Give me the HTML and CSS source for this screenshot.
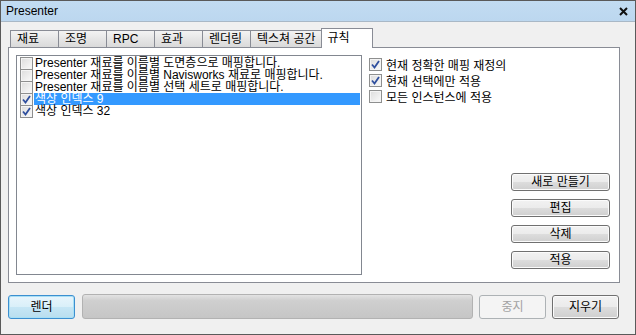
FILE: index.html
```html
<!DOCTYPE html>
<html lang="ko">

<head>
    <meta charset="UTF-8">
    <title>Presenter</title>
    <link rel="stylesheet" href="styles.css">
</head>

<body>
    <div class="window">
        <div class="titlebar">
            <span class="title">Presenter</span>
            <svg class="close" width="9" height="9" viewBox="0 0 9 9">
                <path d="M1 1 L8 8 M8 1 L1 8" stroke="#111" stroke-width="2" />
            </svg>
        </div>

        <div class="content">
            <div class="tabs">
                <div class="tab">재료</div>
                <div class="tab">조명</div>
                <div class="tab">RPC</div>
                <div class="tab">효과</div>
                <div class="tab">렌더링</div>
                <div class="tab">텍스쳐 공간</div>
                <div class="tab active">규칙</div>
            </div>

            <div class="panel">
                <div class="list">
                    <div class="row">
                        <span class="cb"></span>
                        <span class="label">Presenter 재료를 이름별 도면층으로 매핑합니다.</span>
                    </div>
                    <div class="row">
                        <span class="cb"></span>
                        <span class="label">Presenter 재료를 이름별 Navisworks 재료로 매핑합니다.</span>
                    </div>
                    <div class="row">
                        <span class="cb"></span>
                        <span class="label">Presenter 재료를 이름별 선택 세트로 매핑합니다.</span>
                    </div>
                    <div class="row selected">
                        <span class="cb checked">
                            <svg width="11" height="11" viewBox="0 0 11 11"><path d="M2 5.5 L4.5 8.5 L9 2" fill="none" stroke="#2f4f9e" stroke-width="1.8" /></svg>
                        </span>
                        <span class="label">색상 인덱스 9</span>
                    </div>
                    <div class="row">
                        <span class="cb checked">
                            <svg width="11" height="11" viewBox="0 0 11 11"><path d="M2 5.5 L4.5 8.5 L9 2" fill="none" stroke="#2f4f9e" stroke-width="1.8" /></svg>
                        </span>
                        <span class="label">색상 인덱스 32</span>
                    </div>
                </div>

                <div class="side">
                    <div class="options">
                        <div class="option">
                            <span class="cb checked">
                                <svg width="11" height="11" viewBox="0 0 11 11"><path d="M2 5.5 L4.5 8.5 L9 2" fill="none" stroke="#2f4f9e" stroke-width="1.8" /></svg>
                            </span>
                            <span>현재 정확한 매핑 재정의</span>
                        </div>
                        <div class="option">
                            <span class="cb checked">
                                <svg width="11" height="11" viewBox="0 0 11 11"><path d="M2 5.5 L4.5 8.5 L9 2" fill="none" stroke="#2f4f9e" stroke-width="1.8" /></svg>
                            </span>
                            <span>현재 선택에만 적용</span>
                        </div>
                        <div class="option">
                            <span class="cb"></span>
                            <span>모든 인스턴스에 적용</span>
                        </div>
                    </div>

                    <div class="actions">
                        <button class="btn">새로 만들기</button>
                        <button class="btn">편집</button>
                        <button class="btn">삭제</button>
                        <button class="btn">적용</button>
                    </div>
                </div>
            </div>

            <div class="bottom">
                <button class="btn big render">렌더</button>
                <div class="progress"></div>
                <button class="btn big" disabled>중지</button>
                <button class="btn big">지우기</button>
            </div>
        </div>
    </div>
</body>

</html>
```

FILE: styles.css
```css
* {
    margin: 0;
    padding: 0;
    box-sizing: border-box;
}

:root {
    --face: #f0f0f0;
    --tab-border: #898c95;
    --text: #000000;
    --ui-font: "Liberation Sans", "Noto Sans CJK KR", sans-serif;
}

body {
    background-color: var(--face);
    font-family: var(--ui-font);
    font-size: 12px;
    color: var(--text);
}

.window {
    width: 636px;
    height: 335px;
    border: 1px solid #5a5a5a;
    background-color: var(--face);
    display: flex;
    flex-direction: column;
}

.titlebar {
    height: 21px;
    background: linear-gradient(#c2dcf2, #bcd7ef);
    border-bottom: 1px solid #a9b8c6;
    display: flex;
    align-items: center;
    justify-content: space-between;
    padding: 0 7px 0 5px;
}

.title {
    font-size: 12px;
}

.content {
    padding: 6px 15px 0 7px;
    display: flex;
    flex-direction: column;
}

/* tab strip */
.tabs {
    display: flex;
    align-items: flex-end;
    height: 19px;
    padding-left: 2px;
}

.tab {
    height: 17px;
    min-width: 49px;
    padding: 0 6px;
    margin-right: -1px;
    border: 1px solid var(--tab-border);
    border-bottom: none;
    background: linear-gradient(#f3f3f3, #e6e6e6 50%, #dadada);
    line-height: 16px;
    white-space: nowrap;
}

.tab.active {
    height: 20px;
    min-width: 52px;
    margin-left: -1px;
    margin-bottom: -1px;
    background: #ffffff;
    position: relative;
    z-index: 1;
    padding-top: 1px;
}

/* panel */
.panel {
    width: 612px;
    height: 236px;
    border: 1px solid var(--tab-border);
    background: #ffffff;
    display: flex;
    padding: 7px 0 7px 7px;
}

.list {
    width: 346px;
    border: 1px solid #828790;
    padding: 0 1px 0 3px;
}

.row {
    display: flex;
    align-items: center;
    height: 12px;
    white-space: nowrap;
}

.row:first-child {
    margin-top: 1px;
}

.label {
    padding: 0 1px;
    line-height: 12px;
    flex: 1;
}

.row.selected .label {
    background: #3399ff;
    color: #ffffff;
}

.cb {
    width: 13px;
    height: 13px;
    flex: none;
    border: 1px solid #8e8f8f;
    background: linear-gradient(135deg, #dcdcdc, #fafafa);
    box-shadow: inset 0 0 0 1px #f4f4f4;
    display: flex;
    align-items: center;
    justify-content: center;
    margin-right: 1px;
}

.side {
    flex: 1;
    display: flex;
    flex-direction: column;
    justify-content: space-between;
    padding: 2px 9px 6px 7px;
}

.options {
    display: flex;
    flex-direction: column;
    gap: 2px;
}

.option {
    display: flex;
    align-items: center;
    gap: 3px;
    height: 14px;
}

.actions {
    display: flex;
    flex-direction: column;
    align-items: flex-end;
    gap: 8px;
}

.btn {
    font-family: var(--ui-font);
    font-size: 12px;
    color: var(--text);
    width: 99px;
    height: 18px;
    border: 1px solid #707070;
    border-radius: 3px;
    background: linear-gradient(#f2f2f2, #ebebeb 50%, #dddddd 50%, #cfcfcf);
    box-shadow: inset 0 0 0 1px #fbfbfb;
    line-height: 14px;
}

/* bottom row */
.bottom {
    display: flex;
    align-items: center;
    margin-top: 11px;
    width: 612px;
}

.btn.big {
    width: 67px;
    height: 24px;
}

.btn.render {
    border-color: #3c8fd0;
    background: linear-gradient(#e8f5fc, #d9eff9 50%, #c6e6f5 50%, #b9deef);
    box-shadow: inset 0 0 0 1px #a8dff5;
}

.btn:disabled {
    color: #a3a3a3;
    border-color: #adb2b5;
    background: #f4f4f4;
    box-shadow: none;
}

.progress {
    width: 391px;
    height: 25px;
    margin: 0 6px 0 7px;
    border: 1px solid #b2b2b2;
    border-radius: 3px;
    background: linear-gradient(#e3e3e3, #cfcfcf 25%, #c6c6c6);
}

.bottom .btn:last-child {
    margin-left: 6px;
}
```
